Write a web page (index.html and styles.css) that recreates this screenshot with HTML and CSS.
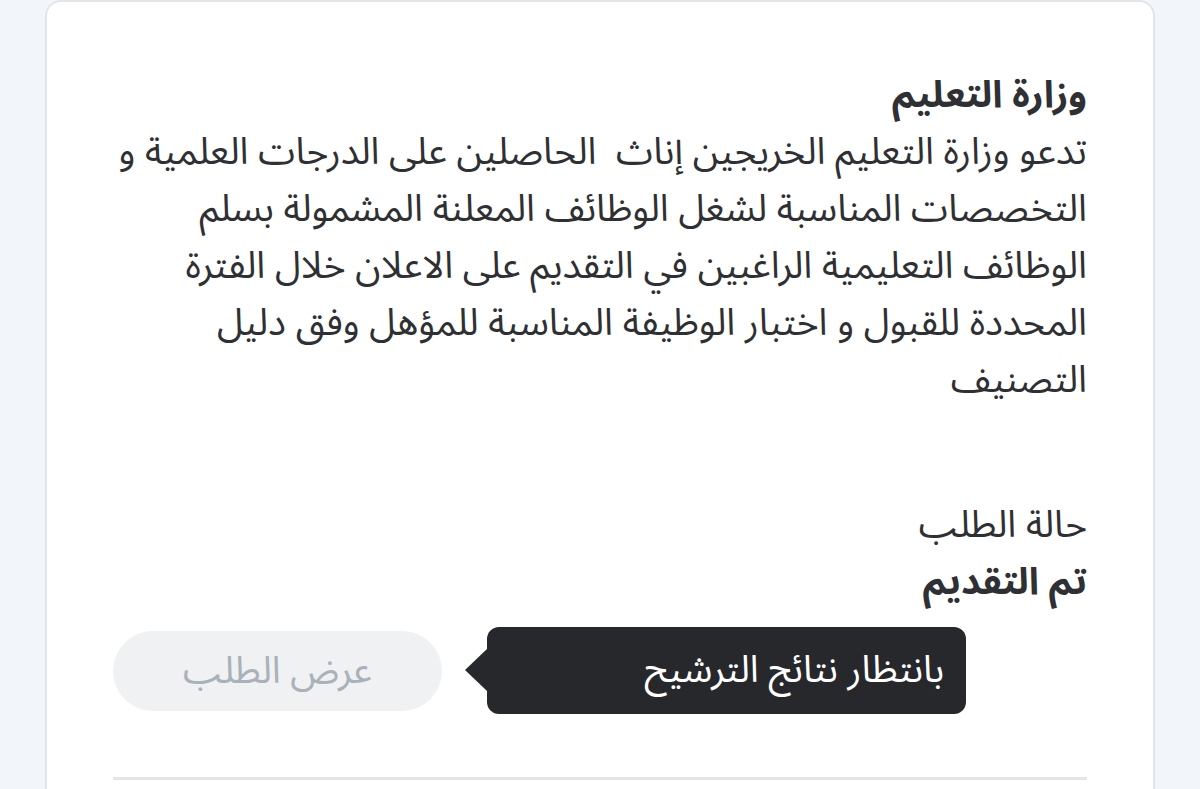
FILE: index.html
```html
<!DOCTYPE html>
<html lang="ar" dir="rtl">
<head>
  <meta charset="UTF-8">
  <meta name="viewport" content="width=device-width, initial-scale=1.0">
  <title>حالة الطلب</title>
  <link rel="stylesheet" href="styles.css">
</head>
<body>
  <!-- بطاقة الوظيفة -->
  <div class="card">
    <h1 class="card-title">وزارة التعليم</h1>
    <p class="card-text">
      <span class="line">تدعو وزارة التعليم الخريجين إناث&nbsp; الحاصلين على الدرجات العلمية و</span>
      <span class="line">التخصصات المناسبة لشغل الوظائف المعلنة المشمولة بسلم</span>
      <span class="line">الوظائف التعليمية الراغبين في التقديم على الاعلان خلال الفترة</span>
      <span class="line">المحددة للقبول و اختبار الوظيفة المناسبة للمؤهل وفق دليل</span>
      <span class="line">التصنيف</span>
    </p>

    <!-- حالة الطلب -->
    <div class="status">
      <div class="status-label">حالة الطلب</div>
      <div class="status-value">تم التقديم</div>
    </div>

    <div class="actions">
      <div class="btn-wrap">
        <button class="btn-view" type="button" disabled>عرض الطلب</button>
        <div class="tooltip">بانتظار نتائج الترشيح</div>
      </div>
    </div>

    <hr class="divider">
  </div>
</body>
</html>
```

FILE: styles.css
```css
:root {
  --page-bg: #f2f5f9;
  --card-border: #e1e4e9;
  --text-color: #2f3033;
  --btn-bg: #eff1f3;
  --btn-text: #a9b1b9;
  --tooltip-bg: #26282c;
  --font-family: "Noto Sans Arabic", "DejaVu Sans", sans-serif;
  --font-size: 37.5px;
}
* {
  box-sizing: border-box;
  margin: 0;
  padding: 0;
}
body {
  font-family: var(--font-family);
  background: var(--page-bg);
  color: var(--text-color);
  height: 789px;
  overflow: hidden;
}
/* Карточка */
.card {
  margin: 0 45px;
  min-height: 820px;
  background: #fff;
  border: 2px solid var(--card-border);
  border-bottom: none;
  border-radius: 16px 16px 0 0;
  padding: 65px 66px 0;
}
.card-title {
  font-size: var(--font-size);
  font-weight: bold;
  line-height: 57px;
}
.card-text {
  font-size: var(--font-size);
  line-height: 57px;
}
.card-text .line {
  display: block;
  white-space: nowrap;
}
/* Статус */
.status {
  margin-top: 88px;
  font-size: var(--font-size);
  line-height: 57px;
}
.status-value {
  font-weight: bold;
}
.actions {
  direction: ltr;
  margin-top: 16px;
  display: flex;
}
.btn-wrap {
  position: relative;
  padding-top: 4px;
}
.btn-view {
  width: 329px;
  height: 80px;
  border: none;
  border-radius: 40px;
  background: var(--btn-bg);
  color: var(--btn-text);
  font-family: var(--font-family);
  font-size: var(--font-size);
  line-height: 80px;
  cursor: default;
}
.tooltip {
  position: absolute;
  top: 0;
  left: 374px;
  width: 479px;
  height: 87px;
  background: var(--tooltip-bg);
  color: #fff;
  border-radius: 12px;
  direction: rtl;
  font-size: var(--font-size);
  line-height: 87px;
  padding: 0 22px;
  white-space: nowrap;
}
.tooltip::before {
  content: "";
  position: absolute;
  left: -22px;
  top: 22px;
  border-top: 21px solid transparent;
  border-bottom: 21px solid transparent;
  border-right: 22px solid var(--tooltip-bg);
}
.divider {
  margin-top: 66px;
  border: none;
  height: 3px;
  background: #e3e5e6;
}
```
